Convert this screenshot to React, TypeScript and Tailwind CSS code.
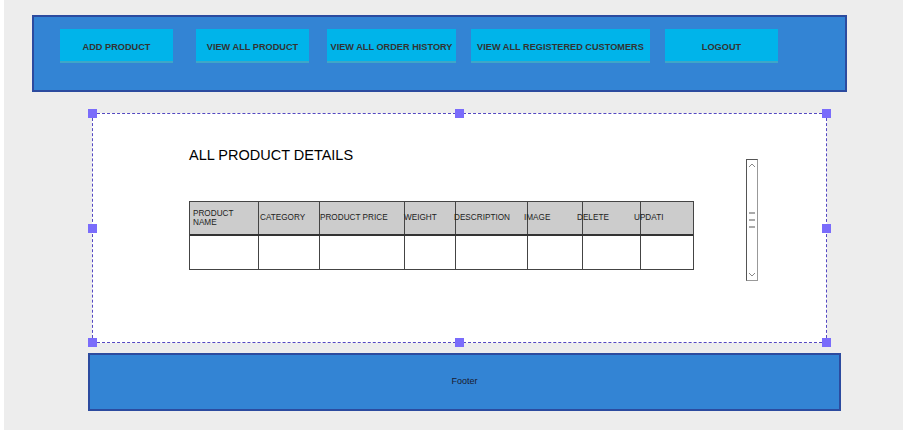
import React from "react";

const navItems = [
  { label: "ADD PRODUCT", className: "ml-[26px] w-[113px]" },
  { label: "VIEW ALL PRODUCT", className: "ml-[23px] w-[113px]" },
  { label: "VIEW ALL ORDER HISTORY", className: "ml-[18px] w-[129px]" },
  { label: "VIEW ALL REGISTERED CUSTOMERS", className: "ml-[15px] w-[179px]" },
  { label: "LOGOUT", className: "ml-[15px] w-[113px]" },
];

// header cells: width + where the label sits (labels drift over the grid lines)
const columns = [
  { label: "PRODUCT NAME", w: "w-[69px]", text: "ml-[3px] w-[45px] leading-[9px]" },
  { label: "CATEGORY", w: "w-[61px]", text: "ml-[1px] whitespace-nowrap" },
  { label: "PRODUCT PRICE", w: "w-[85px]", text: "ml-0 whitespace-nowrap" },
  { label: "WEIGHT", w: "w-[51px]", text: "-ml-[1px] whitespace-nowrap" },
  { label: "DESCRIPTION", w: "w-[72px]", text: "-ml-[2px] whitespace-nowrap" },
  { label: "IMAGE", w: "w-[55px]", text: "-ml-[4px] whitespace-nowrap" },
  { label: "DELETE", w: "w-[58px]", text: "-ml-[6px] whitespace-nowrap" },
  { label: "UPDATI", w: "w-[53px]", text: "-ml-[7px] whitespace-nowrap" },
];

function Handle({ className }: { className: string }) {
  return <span className={`absolute h-[9px] w-[9px] bg-[#7a6cfb] ${className}`} />;
}

function ScrollBar() {
  return (
    <div className="mt-[45px] flex h-[122px] w-[12px] flex-col items-center justify-between border border-[#555] border-r-[#999] border-b-[#999] bg-white py-[2px]">
      <svg width="8" height="6" viewBox="0 0 8 6" fill="none" stroke="#888" strokeWidth="1">
        <path d="M1 5 L4 2 L7 5" />
      </svg>
      <div className="flex flex-col gap-[5px]">
        <span className="block h-[2px] w-[6px] bg-[#aaa]" />
        <span className="block h-[2px] w-[6px] bg-[#aaa]" />
        <span className="block h-[2px] w-[6px] bg-[#aaa]" />
      </div>
      <svg width="8" height="6" viewBox="0 0 8 6" fill="none" stroke="#888" strokeWidth="1">
        <path d="M1 1 L4 4 L7 1" />
      </svg>
    </div>
  );
}

export default function App() {
  return (
    <div className="h-[433px] w-[903px] bg-white" style={{ fontFamily: "'Liberation Sans', Arial, sans-serif" }}>
      <div className="ml-[4px] flex h-[430px] w-[899px] flex-col bg-[#ededed] pt-[1px]">
        <header className="ml-[28px] mt-[14px] h-[77px] w-[815px] border-2 border-[#2c4b9f] bg-[#3384d4] pt-[12px]">
          <nav className="flex">
            {navItems.map((item) => (
              <div
                key={item.label}
                className={`flex h-[34px] items-center justify-center whitespace-nowrap border-b-2 border-[#3fa7c7] bg-[#00b4ea] pt-[5px] text-[9.2px] font-bold text-[#333] ${item.className}`}
              >
                {item.label}
              </div>
            ))}
          </nav>
        </header>

        <section className="relative ml-[88px] mt-[21px] h-[230px] w-[735px] border border-dashed border-[#5448c2] bg-white">
          <Handle className="-left-[5px] -top-[5px]" />
          <Handle className="left-[362px] -top-[5px]" />
          <Handle className="-right-[5px] -top-[5px]" />
          <Handle className="-left-[5px] top-[110px]" />
          <Handle className="-right-[5px] top-[110px]" />
          <Handle className="-bottom-[5px] -left-[5px]" />
          <Handle className="-bottom-[5px] left-[362px]" />
          <Handle className="-bottom-[5px] -right-[5px]" />

          <div className="flex">
            <div className="ml-[96px] pt-[32px]">
              <h1 className="text-[14.5px] leading-[18px] text-black">ALL PRODUCT DETAILS</h1>
              <div className="mt-[37px] w-[505px] border border-[#444] text-[8.2px] text-[#222]">
                <div className="flex h-[34px] border-b-2 border-[#333] bg-[#cccccc]">
                  {columns.map((c, i) => (
                    <div
                      key={c.label}
                      className={`flex shrink-0 items-center ${c.w} ${i < columns.length - 1 ? "border-r border-[#444]" : ""}`}
                    >
                      <span className={`inline-block ${c.text}`}>{c.label}</span>
                    </div>
                  ))}
                </div>
                <div className="flex h-[33px]">
                  {columns.map((c, i) => (
                    <div
                      key={c.label}
                      className={`shrink-0 ${c.w} ${i < columns.length - 1 ? "border-r border-[#444]" : ""}`}
                    />
                  ))}
                </div>
              </div>
            </div>
            <div className="ml-[52px]">
              <ScrollBar />
            </div>
          </div>
        </section>

        <footer className="ml-[84px] mt-[10px] flex h-[58px] w-[753px] items-center justify-center border-2 border-[#2c4b9f] bg-[#3384d4] text-[9px] text-[#1a1a2e]">
          Footer
        </footer>
      </div>
    </div>
  );
}
